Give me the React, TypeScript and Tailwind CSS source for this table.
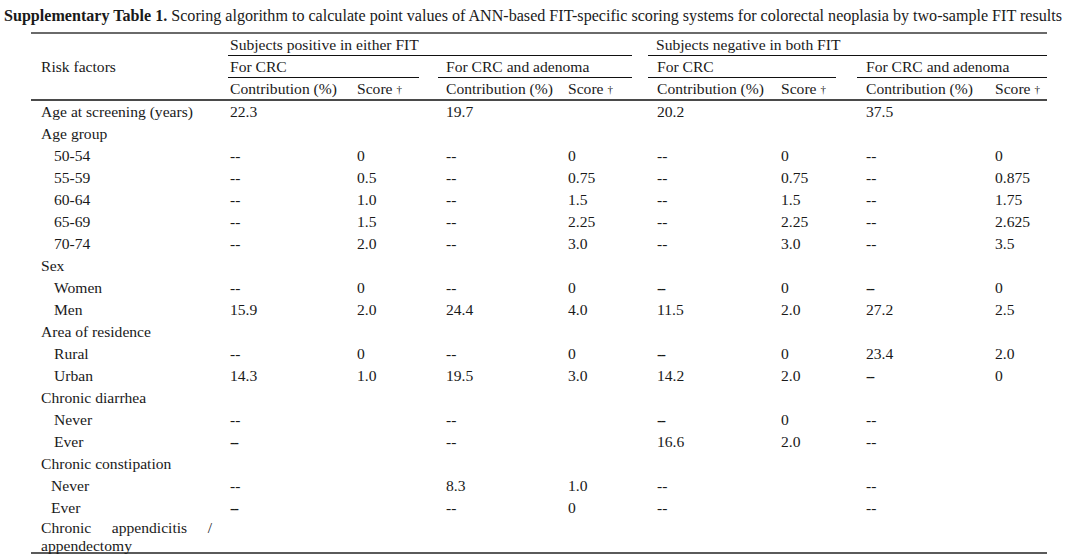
import React from "react";

type Cell = string | { v: string; b: true };

type Row = {
  label: string;
  indent?: "sub" | "sub2";
  cells?: Cell[];
};

const B = (v: string): Cell => ({ v, b: true });

const rows: Row[] = [
  { label: "Age at screening (years)", cells: ["22.3", "", "19.7", "", "20.2", "", "37.5", ""] },
  { label: "Age group" },
  { label: "50-54", indent: "sub", cells: ["--", "0", "--", "0", "--", "0", "--", "0"] },
  { label: "55-59", indent: "sub", cells: ["--", "0.5", "--", "0.75", "--", "0.75", "--", "0.875"] },
  { label: "60-64", indent: "sub", cells: ["--", "1.0", "--", "1.5", "--", "1.5", "--", "1.75"] },
  { label: "65-69", indent: "sub", cells: ["--", "1.5", "--", "2.25", "--", "2.25", "--", "2.625"] },
  { label: "70-74", indent: "sub", cells: ["--", "2.0", "--", "3.0", "--", "3.0", "--", "3.5"] },
  { label: "Sex" },
  { label: "Women", indent: "sub", cells: ["--", "0", "--", "0", B("--"), "0", B("--"), "0"] },
  { label: "Men", indent: "sub", cells: ["15.9", "2.0", "24.4", "4.0", "11.5", "2.0", "27.2", "2.5"] },
  { label: "Area of residence" },
  { label: "Rural", indent: "sub", cells: ["--", "0", "--", "0", B("--"), "0", "23.4", "2.0"] },
  { label: "Urban", indent: "sub", cells: ["14.3", "1.0", "19.5", "3.0", "14.2", "2.0", B("--"), "0"] },
  { label: "Chronic diarrhea" },
  { label: "Never", indent: "sub", cells: ["--", "", "--", "", B("--"), "0", "--", ""] },
  { label: "Ever", indent: "sub", cells: [B("--"), "", "--", "", "16.6", "2.0", "--", ""] },
  { label: "Chronic constipation" },
  { label: "Never", indent: "sub2", cells: ["--", "", "8.3", "1.0", "--", "", "--", ""] },
  { label: "Ever", indent: "sub2", cells: [B("--"), "", "--", "0", "--", "", "--", ""] },
];

// grid columns: label | contrib score | gap | contrib score | gap | contrib score | gap | contrib score
const cols =
  "grid grid-cols-[197px_127px_64px_19px_128px_66px_16px_131px_57px_21px_136px_54px]";

// column index in grid (1-based) and text padding for each data cell
const cellPos = [
  "col-start-2 pl-[2px]",
  "col-start-3 pl-[2px]",
  "col-start-5 pl-[8px]",
  "col-start-6 pl-[2px]",
  "col-start-8 pl-[9px]",
  "col-start-9 pl-[2px]",
  "col-start-11 pl-[9px]",
  "col-start-12 pl-[2px]",
];

function Dagger() {
  return <sup className="text-[11px] ml-[4px] relative -top-[1px]">†</sup>;
}

export default function App() {
  return (
    <div
      className="w-[1080px] h-[560px] bg-white text-[#1a1a1a] overflow-hidden"
      style={{ fontFamily: '"Liberation Serif", "Times New Roman", serif' }}
    >
      <div className="pl-[4px] pt-[5px] h-[32px] text-[16.1px] leading-[22px] whitespace-nowrap">
        <span className="font-bold">Supplementary Table 1.</span> Scoring algorithm to calculate point
        values of ANN-based FIT-specific scoring systems for colorectal neoplasia by two-sample FIT
        results
      </div>

      <div className="ml-[31px] w-[1016px] text-[15.6px]">
        {/* header */}
        <div className={`${cols} grid-rows-[22px_22px_21px] border-t-2 border-b-2 border-t-[#6a6a6a] border-b-[#4a4a4a] leading-[21px]`}>
          <div className="row-span-3 pl-[10px] flex items-center">Risk factors</div>

          <div className="col-start-2 col-span-5 row-start-1 border-b border-[#111] pl-[2px]">
            Subjects positive in either FIT
          </div>
          <div className="col-start-8 col-span-5 row-start-1 border-b border-[#111] pl-[8px]">
            Subjects negative in both FIT
          </div>

          <div className="col-start-2 col-span-2 row-start-2 border-b border-[#111] pl-[2px]">For CRC</div>
          <div className="col-start-5 col-span-2 row-start-2 border-b border-[#111] pl-[8px]">
            For CRC and adenoma
          </div>
          <div className="col-start-8 col-span-2 row-start-2 border-b border-[#111] pl-[9px]">For CRC</div>
          <div className="col-start-11 col-span-2 row-start-2 border-b border-[#111] pl-[9px]">
            For CRC and adenoma
          </div>

          <div className="col-start-2 row-start-3 pl-[2px] whitespace-nowrap">Contribution (%)</div>
          <div className="col-start-3 row-start-3 pl-[2px] whitespace-nowrap">
            Score<Dagger />
          </div>
          <div className="col-start-5 row-start-3 pl-[8px] whitespace-nowrap">Contribution (%)</div>
          <div className="col-start-6 row-start-3 pl-[2px] whitespace-nowrap">
            Score<Dagger />
          </div>
          <div className="col-start-8 row-start-3 pl-[9px] whitespace-nowrap">Contribution (%)</div>
          <div className="col-start-9 row-start-3 pl-[2px] whitespace-nowrap">
            Score<Dagger />
          </div>
          <div className="col-start-11 row-start-3 pl-[9px] whitespace-nowrap">Contribution (%)</div>
          <div className="col-start-12 row-start-3 pl-[2px] whitespace-nowrap">
            Score<Dagger />
          </div>
        </div>

        {/* body */}
        <div className="border-b-2 border-[#5a5a5a]">
          {rows.map((r, i) => (
            <div key={i} className={`${cols} h-[22px] leading-[22px]`}>
              <div
                className={`col-start-1 whitespace-nowrap ${
                  r.indent === "sub" ? "pl-[23px]" : r.indent === "sub2" ? "pl-[20px]" : "pl-[10px]"
                }`}
              >
                {r.label}
              </div>
              {r.cells?.map((c, j) =>
                typeof c === "string" ? (
                  <div key={j} className={`${cellPos[j]} row-start-1 whitespace-nowrap`}>
                    {c}
                  </div>
                ) : (
                  <div key={j} className={`${cellPos[j]} row-start-1 whitespace-nowrap font-bold tracking-[-1.5px]`}>
                    {c.v}
                  </div>
                )
              )}
            </div>
          ))}
          <div className={`${cols} h-[33px]`}>
            <div className="col-start-1 pl-[10px] pr-[16px] text-justify leading-[18px]">
              Chronic appendicitis / appendectomy
            </div>
          </div>
        </div>
      </div>
    </div>
  );
}
